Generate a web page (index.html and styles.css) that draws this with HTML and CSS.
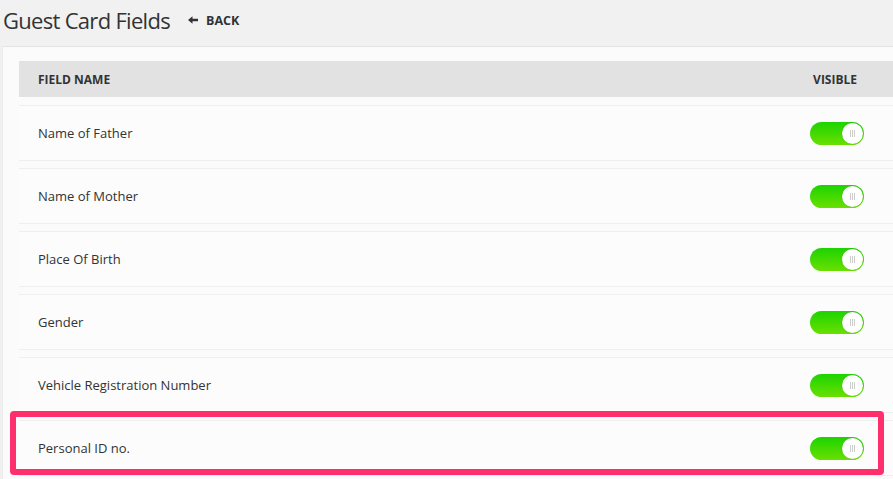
FILE: index.html
```html
<!DOCTYPE html>
<html>
<head>
<meta charset="utf-8">
<link rel="stylesheet" href="styles.css">
</head>
<body>
<div class="topbar">
  <h1 class="title">Guest Card Fields</h1>
  <a class="back"><svg class="arrow" width="10" height="8" viewBox="0 0 10 8"><path d="M0 4 L4.5 0.2 V2.8 H10 V5.2 H4.5 V7.8 Z" fill="#333"/></svg>BACK</a>
</div>
<div class="panel">
  <div class="thead">
    <span>FIELD NAME</span>
    <span>VISIBLE</span>
  </div>
  <div class="row"><span>Name of Father</span><span class="toggle"><span class="knob"><i></i></span></span></div>
  <div class="row"><span>Name of Mother</span><span class="toggle"><span class="knob"><i></i></span></span></div>
  <div class="row"><span>Place Of Birth</span><span class="toggle"><span class="knob"><i></i></span></span></div>
  <div class="row"><span>Gender</span><span class="toggle"><span class="knob"><i></i></span></span></div>
  <div class="row"><span>Vehicle Registration Number</span><span class="toggle"><span class="knob"><i></i></span></span></div>
  <div class="row"><span>Personal ID no.</span><span class="toggle"><span class="knob"><i></i></span></span></div>
  <div class="highlight"></div>
</div>
</body>
</html>
```
FILE: styles.css
```css
html, body {
  margin: 0;
  padding: 0;
  overflow: hidden;
  background: #f0f0f0;
  font-family: "Open Sans", "Noto Sans", sans-serif;
  color: #333;
}
.topbar {
  height: 46px;
  display: flex;
  align-items: center;
  padding-left: 3px;
  background: #f1f1f1;
}
.title {
  margin: 0;
  font-weight: 400;
  font-size: 22px;
  letter-spacing: -0.7px;
  color: #333;
  position: relative;
  top: -3px;
}
.back {
  margin-left: 18px;
  font-size: 12.5px;
  font-weight: 700;
  color: #333;
  display: flex;
  align-items: center;
  position: relative;
  top: -3px;
}
.arrow {
  margin-right: 8px;
}
.panel {
  position: relative;
  margin-left: 2px;
  border-top: 1px solid #e3e3e3;
  border-left: 1px solid #ebebeb;
  background: #fbfbfb;
  padding: 14px 0 20px 16px;
  height: 420px;
  width: 874px;
}
.thead {
  height: 36px;
  background: #e2e2e2;
  display: flex;
  align-items: center;
  justify-content: space-between;
  padding: 0 36px 0 19px;
  font-size: 12px;
  font-weight: 700;
  color: #333;
  margin-bottom: 8px;
}
.row {
  height: 54px;
  border-top: 1px solid #efefef;
  border-bottom: 1px solid #efefef;
  background: #fcfcfc;
  margin-bottom: 7px;
  display: flex;
  align-items: center;
  justify-content: space-between;
  padding: 0 29px 0 19px;
  font-size: 13px;
  color: #333;
}
.toggle {
  width: 54px;
  height: 23px;
  border-radius: 12px;
  background: linear-gradient(to bottom, #1dd300, #6ae000);
  display: flex;
  align-items: center;
  justify-content: flex-end;
  padding-right: 1px;
  box-sizing: border-box;
}
.knob {
  width: 21px;
  height: 21px;
  border-radius: 50%;
  background: #fff;
  box-shadow: 0 0 1px rgba(0,0,0,0.25);
  display: flex;
  align-items: center;
  justify-content: center;
}
.knob i {
  width: 1px;
  height: 7px;
  background: #ccc;
  box-shadow: 2px 0 0 #ccc, -2px 0 0 #ccc;
}
.highlight {
  position: absolute;
  left: 7px;
  top: 364px;
  width: 862px;
  height: 52px;
  border: 6px solid #ff2e6c;
  border-radius: 4px;
}
```
